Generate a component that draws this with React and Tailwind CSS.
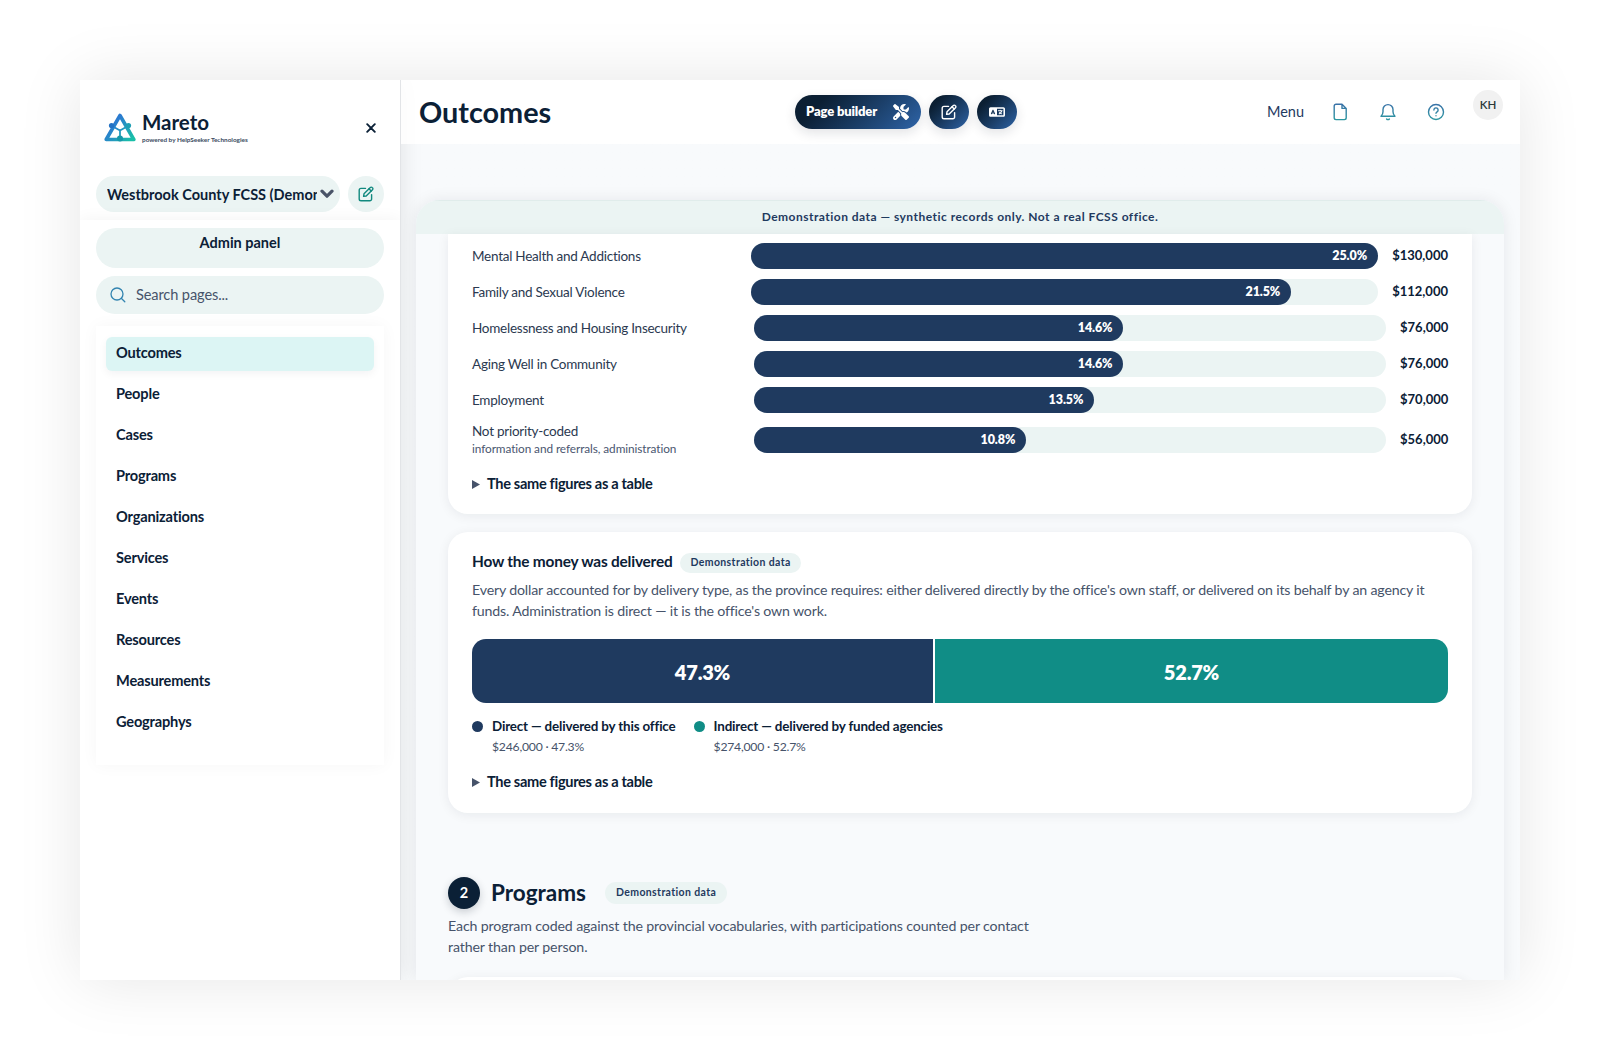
import { FaScrewdriverWrench, FaLanguage } from 'react-icons/fa6'

const pages = ['Outcomes', 'People', 'Cases', 'Programs', 'Organizations', 'Services', 'Events', 'Resources', 'Measurements', 'Geographys']

const priorities = [
  { label: 'Mental Health and Addictions', share: '25.0%', amount: 130 },
  { label: 'Family and Sexual Violence', share: '21.5%', amount: 112 },
  { label: 'Homelessness and Housing Insecurity', share: '14.6%', amount: 76 },
  { label: 'Aging Well in Community', share: '14.6%', amount: 76 },
  { label: 'Employment', share: '13.5%', amount: 70 },
  { label: 'Not priority-coded', note: 'information and referrals, administration', share: '10.8%', amount: 56 },
]

function Logo() {
  return (
    <svg width="32" height="30" viewBox="0 0 32 30" fill="none">
      <defs>
        <linearGradient id="logo" x1="6" y1="6" x2="28" y2="26" gradientUnits="userSpaceOnUse">
          <stop offset="0.2" stopColor="#2b7bd0" />
          <stop offset="1" stopColor="#19bfa8" />
        </linearGradient>
      </defs>
      <g stroke="url(#logo)" strokeLinejoin="round" strokeLinecap="round">
        <path d="M16 2.5 29.8 26.5H2.2Z" strokeWidth="3.6" />
        <path d="M8 13 16 17.5 24 13M16 17.5V26" strokeWidth="1.8" />
      </g>
      <circle cx="7.5" cy="12.5" r="2.6" fill="#2372c4" />
      <circle cx="24.5" cy="12.5" r="2.6" fill="#1f9fb4" />
      <circle cx="16" cy="25.5" r="3" fill="#1598a8" />
    </svg>
  )
}

function EditIcon() {
  return (
    <svg width="16" height="16" viewBox="0 0 16 16" fill="none" stroke="currentColor" strokeWidth="1.4" strokeLinecap="round" strokeLinejoin="round">
      <path d="M7.5 2.4H3A1.8 1.8 0 0 0 1.2 4.2V13A1.8 1.8 0 0 0 3 14.8h8.8a1.8 1.8 0 0 0 1.8-1.8V8.6" />
      <path d="M5.6 10.4 6 7.8l6.3-6.3a1.3 1.3 0 0 1 1.9 0l.3.3a1.3 1.3 0 0 1 0 1.9L8.2 10Z" />
      <path d="m11 2.8 2.2 2.2" />
    </svg>
  )
}

function TopIcon({ children }) {
  return (
    <svg width="18" height="18" viewBox="0 0 18 18" fill="none" stroke="url(#tint)" strokeWidth="1.4" strokeLinecap="round" strokeLinejoin="round">
      <defs>
        <linearGradient id="tint" x1="0" y1="0" x2="0" y2="18" gradientUnits="userSpaceOnUse">
          <stop stopColor="#3a6fa8" />
          <stop offset="1" stopColor="#2b9aa0" />
        </linearGradient>
      </defs>
      {children}
    </svg>
  )
}

function Sidebar() {
  return (
    <aside className="relative z-10 flex w-[321px] shrink-0 flex-col border-r border-[#e2e4e7] bg-white shadow-[0_0_22px_rgba(0,0,0,0.1)]">
      <div className="flex h-[96px] items-center justify-between pr-6 pl-6">
        <div className="flex items-start gap-1.5 pb-[2px]">
          <div className="pt-[2px]"><Logo /></div>
          <div className="w-[108px]">
            <div className="text-[20.5px] leading-[22px] font-bold text-[#0b2036]">Mareto</div>
            <div className="mt-[3px] text-[6.4px] leading-[8px] font-bold whitespace-nowrap text-[#3a4a60]">powered by HelpSeeker Technologies</div>
          </div>
        </div>
        <svg width="10" height="10" viewBox="0 0 10 10" stroke="#0b2036" strokeWidth="1.9" strokeLinecap="round">
          <path d="m1.2 1.2 7.6 7.6M8.8 1.2 1.2 8.8" />
        </svg>
      </div>
      <div className="flex h-[44px] gap-2 px-4">
        <div className="flex h-9 w-[244px] items-center rounded-full bg-[#ebf4f3] pr-1.5 pl-[11px]">
          <span className="w-[210px] shrink-0 overflow-hidden pt-px text-[14.5px] font-bold whitespace-nowrap text-[#0b2036]">Westbrook County FCSS (Demonstration)</span>
          <svg className="ml-[3px] shrink-0" width="14" height="10" viewBox="0 0 14 10" fill="none" stroke="#4a5468" strokeWidth="3.2" strokeLinecap="round" strokeLinejoin="round">
            <path d="m2 2.2 5 5 5-5" />
          </svg>
        </div>
        <div className="flex size-9 items-center justify-center rounded-full bg-[#ebf4f3] text-[#12897f]">
          <EditIcon />
        </div>
      </div>
      <div className="flex flex-col gap-2 px-4 pt-2 shadow-[0_0_16px_rgba(15,23,42,0.05)] [clip-path:inset(-16px_0_0_0)]">
        <div className="h-10 rounded-[20px] bg-[#ebf4f3] pt-[5px] text-center text-[14.5px] leading-5 font-bold text-[#0b2036]">Admin panel</div>
        <div className="flex h-[38px] items-center gap-[10px] rounded-full bg-[#ebf4f3] pb-px pl-[14px] text-[14.6px] tracking-[-0.12px] text-[#46536a]">
          <svg width="16" height="16" viewBox="0 0 16 16" fill="none" stroke="#3284b0" strokeWidth="1.3" strokeLinecap="round">
            <circle cx="7" cy="7" r="6" />
            <path d="m11.5 11.5 3.3 3.3" />
          </svg>
          Search pages...
        </div>
      </div>
      <nav className="mx-4 mt-3 flex h-[439px] flex-col gap-[7px] bg-white px-2.5 pt-[11px] shadow-[0_0_16px_rgba(15,23,42,0.04)]">
        {pages.map(page => (
          <a
            key={page}
            className={page === 'Outcomes'
              ? 'h-[34px] rounded-md bg-[#dcf5f4] pl-2.5 text-[14.6px] leading-[31px] font-bold tracking-[-0.18px] text-[#0b2036] shadow-[0_3px_8px_rgba(15,23,42,0.05)]'
              : 'h-[34px] rounded-md pl-2.5 text-[14.6px] leading-[31px] font-bold tracking-[-0.18px] text-[#0b2036]'}
          >
            {page}
          </a>
        ))}
      </nav>
    </aside>
  )
}

function Header() {
  return (
    <header className="relative z-20 flex h-16 shrink-0 items-center bg-white/80 pr-[17px] pl-[18px]">
      <h1 className="w-[376px] text-[28.8px] leading-9 font-bold text-[#0b2036]">Outcomes</h1>
      <div className="flex gap-2 text-white">
        <button className="flex h-[34px] w-[126px] items-center justify-between rounded-full bg-linear-135 from-[#0b1f33] from-20% to-[#2e64a8] pr-3 pl-[11px] text-[13px] font-extrabold tracking-[-0.15px] shadow-[0_4px_12px_rgba(15,23,42,0.12)]">
          Page builder
          <FaScrewdriverWrench size={16} />
        </button>
        <button className="flex h-[34px] w-10 items-center justify-center rounded-full bg-linear-135 from-[#0b1f33] from-20% to-[#2e64a8] shadow-[0_4px_12px_rgba(15,23,42,0.12)]">
          <EditIcon />
        </button>
        <button className="flex h-[34px] w-10 items-center justify-center rounded-full bg-linear-135 from-[#0b1f33] from-20% to-[#2e64a8] shadow-[0_4px_12px_rgba(15,23,42,0.12)]">
          <FaLanguage size={16} />
        </button>
      </div>
      <div className="ml-auto flex items-center">
        <span className="mr-[27px] pb-px text-[14.5px] text-[#1e3a5f]">Menu</span>
        <div className="mr-[28px] flex items-center gap-[30px]">
          <TopIcon>
            <path d="M5 1.2h6l4.2 4.2v9.4a1.8 1.8 0 0 1-1.8 1.8H5a1.8 1.8 0 0 1-1.8-1.8V3A1.8 1.8 0 0 1 5 1.2ZM11 1.4v4h4" />
          </TopIcon>
          <TopIcon>
            <path d="M2 13.2h14c-1.4-1.2-2-2.4-2-4.4V6.6a5 5 0 0 0-10 0v2.2c0 2-.6 3.2-2 4.4ZM7.6 16c.7.8 2.1.8 2.8 0" />
          </TopIcon>
          <TopIcon>
            <circle cx="9" cy="9" r="7.5" />
            <path d="M6.9 7a2.1 2.1 0 1 1 3.2 1.8c-.8.5-1.1.8-1.1 1.5M9 12.7v.1" />
          </TopIcon>
        </div>
        <div className="mb-[14px] flex size-[30px] items-center justify-center rounded-full bg-[#f1f1f1] text-[11.5px] font-semibold text-[#2c3a3a]">KH</div>
      </div>
    </header>
  )
}

function TableToggle() {
  return (
    <div className="flex items-center gap-[7px] text-[14.6px] leading-5 font-bold tracking-[-0.33px] text-[#0b2036]">
      <svg width="8" height="9" viewBox="0 0 8 9" fill="#46536a"><path d="M0 0v9l8-4.5Z" /></svg>
      The same figures as a table
    </div>
  )
}

function PriorityRow({ row }) {
  return (
    <div className="flex items-center gap-[14px]">
      <div className={row.amount > 99 ? 'w-[265px] text-[13.5px] leading-[17px] tracking-[-0.25px] text-[#2b3950]' : 'w-[268px] text-[13.5px] leading-[17px] tracking-[-0.25px] text-[#2b3950]'}>
        {row.label}
        {row.note && <div className="text-[11.8px] leading-[17px] tracking-[-0.08px] text-[#4a5670]">{row.note}</div>}
      </div>
      <div className="h-[26px] flex-1 rounded-full bg-[#ebf4f3]">
        <div
          className="flex h-full items-center justify-end rounded-full bg-[#1f3a5f] pr-[11px] text-[12.5px] font-extrabold tracking-[-0.1px] text-white"
          style={{ width: `${(row.amount / 130) * 100}%` }}
        >
          {row.share}
        </div>
      </div>
      <div className={row.amount > 99 ? 'w-14 text-right text-[13px] font-bold text-[#0b2036]' : 'w-12 text-right text-[13px] font-bold text-[#0b2036]'}>
        ${row.amount},000
      </div>
    </div>
  )
}

export default function App() {
  return (
    <div className="h-[1060px] w-[1600px] overflow-hidden bg-white p-20 font-['Lato',sans-serif] [font-variant-ligatures:none]">
      <div className="flex h-[900px] w-[1440px] overflow-hidden bg-[#f8fafc] shadow-[0_0_60px_rgba(0,0,0,0.1)]">
        <Sidebar />
        <main className="flex min-w-0 flex-1 flex-col bg-linear-to-b from-white from-[64px] to-[#f8fafc] to-[64px]">
          <Header />
          <div className="relative z-20 mt-14 mr-4 ml-[15px] h-[780px] shrink-0 overflow-hidden rounded-t-[24px] bg-[#f8fafc] shadow-[0_0_16px_rgba(15,23,42,0.08)]">
            <div className="h-[34px] border-t border-[#e0eceb] bg-[#ebf4f3] text-center text-[12px] leading-[31px] font-bold tracking-[0.48px] text-[#1f3a5f]">
              Demonstration data — synthetic records only. Not a real FCSS office.
            </div>
            <div className="px-8">
              <section className="h-[280px] rounded-b-[20px] bg-white px-6 pt-[9px] shadow-[0_2px_12px_rgba(15,23,42,0.07)]">
                <div className="mb-[17px] flex flex-col gap-2.5">
                  {priorities.map(row => <PriorityRow key={row.label} row={row} />)}
                </div>
                <TableToggle />
              </section>

              <section className="mt-[18px] h-[281px] rounded-[20px] bg-white px-6 pt-[19px] shadow-[0_2px_12px_rgba(15,23,42,0.07)]">
                <div className="flex h-[22px] items-center gap-2">
                  <h2 className="pb-[2px] text-[15.4px] leading-5 font-bold tracking-[-0.2px] text-[#0b2036]">How the money was delivered</h2>
                  <span className="mt-[2px] h-5 rounded-full bg-[#ebf4f3] px-2.5 text-[10.5px] leading-[19px] font-bold tracking-[0.38px] text-[#1f3a5f]">Demonstration data</span>
                </div>
                <p className="mt-[6px] text-[14.2px] leading-[21px] tracking-[-0.18px] text-[#46536a]">
                  Every dollar accounted for by delivery type, as the province requires: either delivered directly by the office's own staff, or delivered on its behalf by an agency it funds. Administration is direct — it is the office's own work.
                </p>
                <div className="mt-[18px] flex h-16 gap-0.5 overflow-hidden rounded-[14px] text-[20px] font-extrabold tracking-[-0.2px] text-white">
                  <div className="flex w-[461px] items-center justify-center bg-[#1f3a5f] pt-px">47.3%</div>
                  <div className="flex flex-1 items-center justify-center bg-[#108d86] pt-px">52.7%</div>
                </div>
                <div className="mt-[13px] mb-[14px] flex gap-[18px]">
                  <div className="flex gap-[9px]">
                    <span className="mt-[5px] size-[11px] rounded-full bg-[#1f3a5f]" />
                    <div>
                      <div className="text-[13.4px] leading-5 font-bold tracking-[-0.16px] text-[#0b2036]">Direct — delivered by this office</div>
                      <div className="text-[12.2px] leading-[22px] tracking-[-0.22px] text-[#46536a]">$246,000 · 47.3%</div>
                    </div>
                  </div>
                  <div className="flex gap-[9px]">
                    <span className="mt-[5px] size-[11px] rounded-full bg-[#108d86]" />
                    <div>
                      <div className="text-[13.4px] leading-5 font-bold tracking-[-0.16px] text-[#0b2036]">Indirect — delivered by funded agencies</div>
                      <div className="text-[12.2px] leading-[22px] tracking-[-0.22px] text-[#46536a]">$274,000 · 52.7%</div>
                    </div>
                  </div>
                </div>
                <TableToggle />
              </section>

              <section className="mt-16">
                <div className="flex h-8 items-center">
                  <span className="flex size-8 items-center justify-center rounded-full bg-[#0b2036] text-[14.5px] font-bold text-white shadow-[0_3px_8px_rgba(15,23,42,0.2)]">2</span>
                  <h2 className="ml-[11px] pb-px text-[22.5px] font-bold text-[#0b2036]">Programs</h2>
                  <span className="ml-[19px] h-[22px] rounded-full bg-[#ebf4f3] px-[11px] text-[10.5px] leading-[21px] font-bold tracking-[0.38px] text-[#1f3a5f]">Demonstration data</span>
                </div>
                <p className="mt-[6px] w-[600px] text-[14.2px] leading-[21px] tracking-[-0.14px] text-[#46536a]">
                  Each program coded against the provincial vocabularies, with participations counted per contact rather than per person.
                </p>
                <div className="mt-[20px] h-20 rounded-[20px] bg-white shadow-[0_2px_12px_rgba(15,23,42,0.07)]" />
              </section>
            </div>
          </div>
        </main>
      </div>
    </div>
  )
}
